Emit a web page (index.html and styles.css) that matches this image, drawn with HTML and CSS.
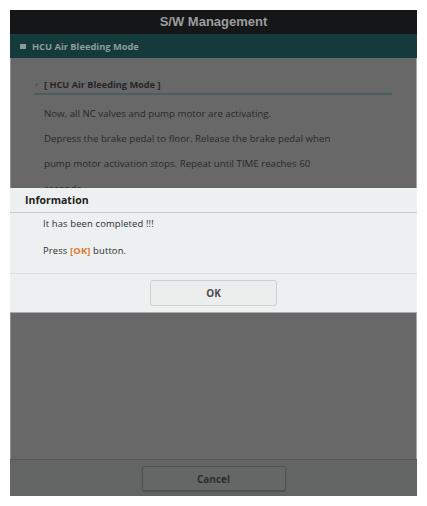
FILE: index.html
```html
<!DOCTYPE html>
<html lang="en">
<head>
    <meta charset="UTF-8">
    <meta name="viewport" content="width=device-width, initial-scale=1.0">
    <title>S/W Management</title>
    <link rel="stylesheet" href="styles.css">
</head>
<body>
    <div class="screen">
        <!-- Title bar -->
        <div class="title-bar">S/W Management</div>

        <!-- Section bar -->
        <div class="section-bar">
            <span class="section-mark"></span>
            <span>HCU Air Bleeding Mode</span>
        </div>

        <!-- Main content (dimmed) -->
        <div class="content">
            <div class="content-heading">
                <span class="dot"></span>
                <span>[ HCU Air Bleeding Mode ]</span>
            </div>
            <p class="content-text">Now, all NC valves and pump motor are activating.</p>
            <p class="content-text narrow">Depress the brake pedal to floor. Release the brake pedal when pump motor activation stops. Repeat until TIME reaches 60 seconds.</p>
        </div>

        <!-- Footer -->
        <div class="footer">
            <button class="cancel-btn">Cancel</button>
        </div>

        <!-- Popup -->
        <div class="dialog">
            <div class="dialog-title">Information</div>
            <div class="dialog-body">
                <p>It has been completed !!!</p>
                <p>Press <span class="hl">[OK]</span> button.</p>
            </div>
            <div class="dialog-actions">
                <button class="ok-btn">OK</button>
            </div>
        </div>
    </div>
</body>
</html>
```

FILE: styles.css
```css
/* Reset and base styles */
* {
    margin: 0;
    padding: 0;
    box-sizing: border-box;
}

body {
    background: #fff;
    font-family: "Open Sans", "Liberation Sans", Arial, sans-serif;
    color: #2a2b2b;
}

/* Device screen */
.screen {
    position: relative;
    margin: 10px 0 0 10px;
    width: 407px;
    height: 486px;
    display: flex;
    flex-direction: column;
    background: #676867;
}

/* Title bar */
.title-bar {
    height: 24px;
    line-height: 24px;
    background: #141618;
    color: #9c9d9e;
    text-align: center;
    font-family: "Liberation Sans", Arial, sans-serif;
    font-weight: bold;
    font-size: 13px;
}

/* Section bar */
.section-bar {
    height: 24px;
    display: flex;
    align-items: center;
    gap: 6px;
    padding-left: 10px;
    background: #153a3c;
    color: #8c9b9b;
    font-weight: bold;
    font-size: 9.3px;
}

.section-mark {
    width: 6px;
    height: 5px;
    background: #8c9b9b;
}

/* Content */
.content {
    flex: 1;
    padding: 18px 24px 0 23px;
    border-left: 1px solid #8e8f8e;
    border-right: 1px solid #a5a6a5;
}

.content-heading {
    display: flex;
    align-items: center;
    gap: 6px;
    height: 19px;
    padding-bottom: 1px;
    border-bottom: 2px solid #4b5e60;
    font-weight: bold;
    font-size: 9.2px;
    color: #262727;
}

.dot {
    width: 3px;
    height: 3px;
    margin-left: 1px;
    border-radius: 50%;
    background: #4b5e60;
}

.content-text {
    padding-left: 10px;
    font-size: 9.7px;
    line-height: 25px;
    color: #2a2b2b;
}

.content-text:first-of-type {
    margin-top: 6px;
}

.narrow {
    max-width: 310px;
}

/* Footer */
.footer {
    height: 37px;
    padding-top: 6px;
    display: flex;
    justify-content: center;
    align-items: flex-start;
    background: #626563;
    border-top: 1px solid #575958;
}

.cancel-btn {
    width: 144px;
    height: 25px;
    background: #646765;
    border: 1px solid #4f5251;
    border-radius: 2px;
    box-shadow: 0 1px 1px rgba(0, 0, 0, 0.2);
    font-family: inherit;
    font-weight: bold;
    font-size: 10px;
    color: #2c2e2d;
}

/* Popup dialog */
.dialog {
    position: absolute;
    top: 178px;
    left: 0;
    width: 100%;
    background: #ecf0f0;
    border-bottom: 1px solid #a9adad;
}

.dialog-title {
    height: 25px;
    line-height: 24px;
    padding-left: 15px;
    border-bottom: 1px solid #c6cbcc;
    font-weight: bold;
    font-size: 10.5px;
    color: #1f2020;
}

.dialog-body {
    padding: 4px 0 15px 33px;
    border-bottom: 1px solid #dde1e2;
    font-size: 9.4px;
    letter-spacing: 0.15px;
    color: #2d2e2e;
}

.dialog-body p {
    line-height: 14px;
}

.dialog-body p + p {
    margin-top: 13px;
}

.hl {
    color: #e07a2e;
    font-weight: bold;
}

.dialog-actions {
    display: flex;
    justify-content: center;
    padding: 6px 0;
}

.ok-btn {
    width: 127px;
    height: 26px;
    background: #eceeee;
    border: 1px solid #cdd1d1;
    border-radius: 3px;
    font-family: inherit;
    font-weight: bold;
    font-size: 10px;
    color: #4a4b4b;
}
```
